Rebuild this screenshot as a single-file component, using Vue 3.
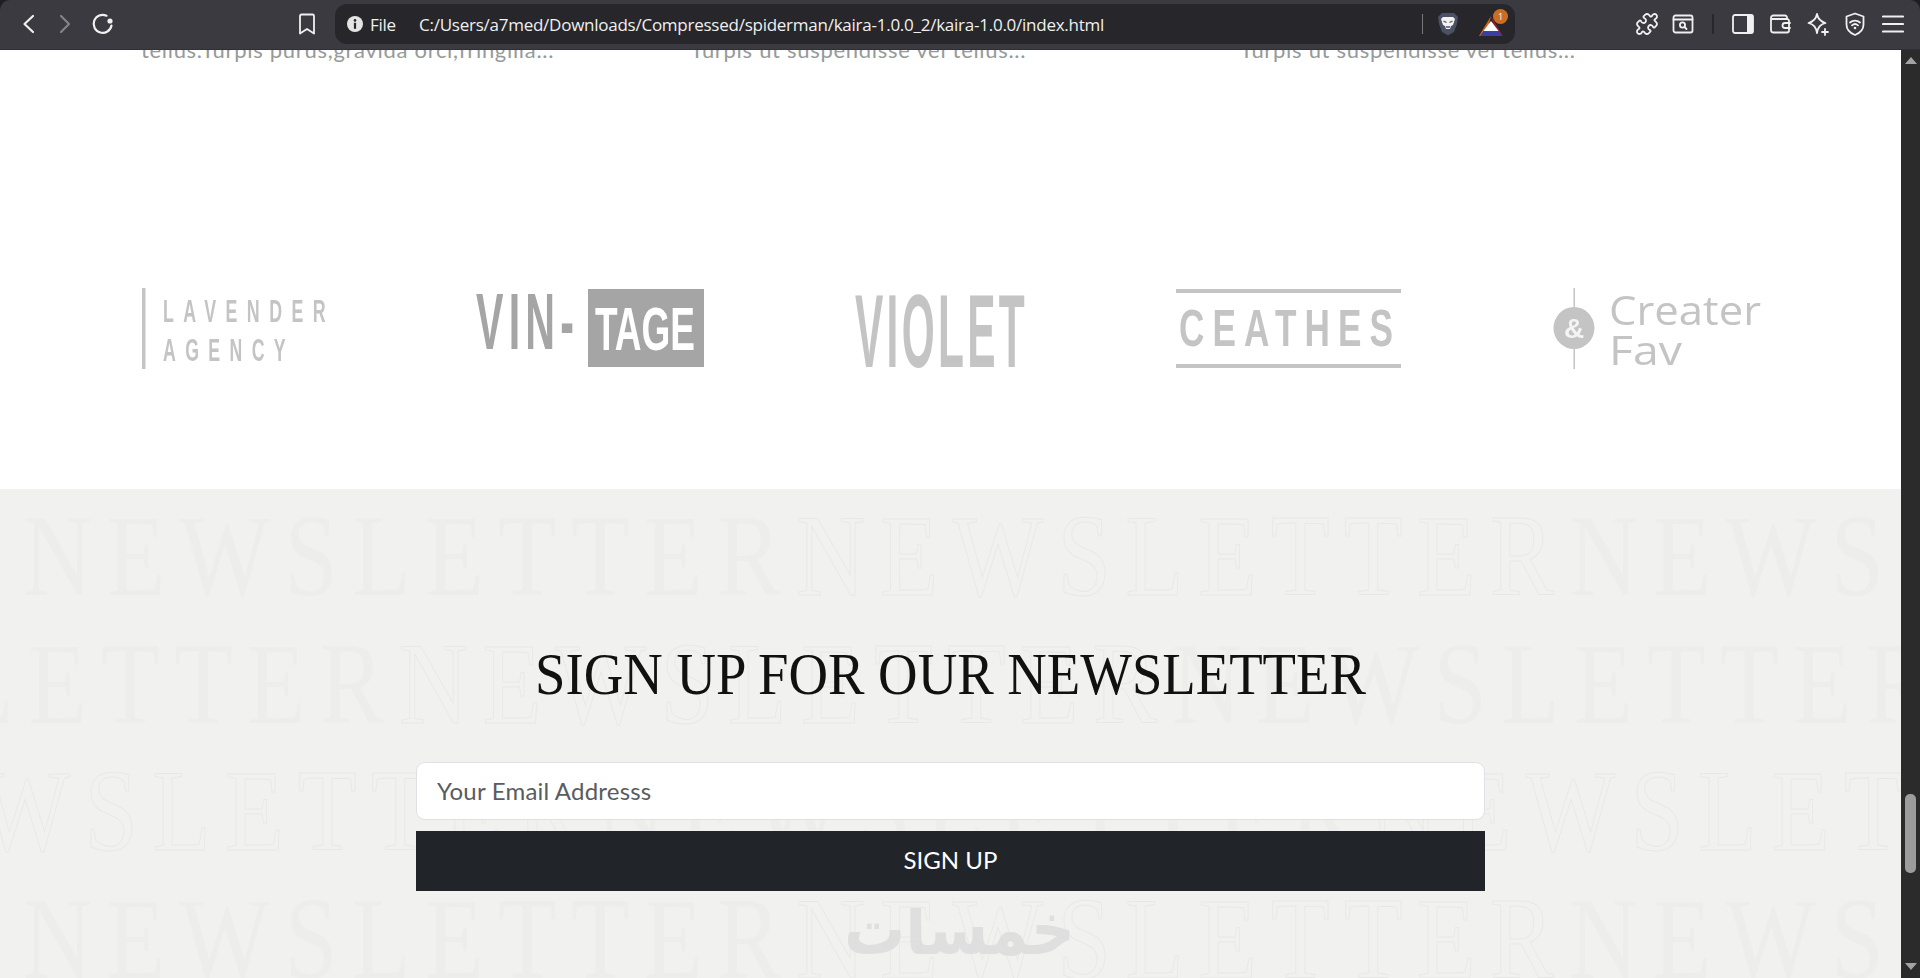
<template>
  <div class="window">
    <header class="toolbar">
      <div class="nav">
        <button class="tool">
          <svg width="24" height="24" viewBox="0 0 24 24"><path class="ln" d="M17 4l-8.5 8 8.500 8" /></svg>
        </button>
        <button class="tool dim">
          <svg width="24" height="24" viewBox="0 0 24 24"><path class="ln" d="M8 4l8 8-8 8" /></svg>
        </button>
        <button class="tool">
          <svg width="24" height="24" viewBox="0 0 24 24">
            <path class="ln" d="M20.500 13.500A9 9 0 1 1 15.500 3.700" />
            <circle cx="19" cy="9" r="2.600" fill="#f0f0f0" />
          </svg>
        </button>
      </div>
      <button class="bookmark">
        <svg width="24" height="24" viewBox="0 0 24 24"><path class="ln thin" d="M6.500 2.500h11a1.500 1.500 0 0 1 1.500 1.500v17.500l-7-4.500-7 4.500V4a1.500 1.500 0 0 1 1.500-1.500z" /></svg>
      </button>
      <div class="address">
        <svg width="16" height="16" viewBox="0 0 16 16">
          <circle cx="8" cy="8" r="8" fill="#e4e4e4" />
          <circle cx="8" cy="4.400" r="1.300" fill="#26262b" />
          <rect x="6.900" y="6.800" width="2.200" height="6" fill="#26262b" />
        </svg>
        <span class="scheme">File</span>
        <span class="url">C:/Users/a7med/Downloads/Compressed/spiderman/kaira-1.0.0_2/kaira-1.0.0/index.html</span>
        <div class="shields">
          <i class="sep"></i>
          <svg class="lion" width="22" height="24" viewBox="0 0 22 24">
            <path d="M5 1h12l4 4-1 7-3 8-6 3.500L5 20l-3-8-1-7z" fill="#4c5064" />
            <path d="M6 5h10l2 2-2 6-2 1-1 3h-4l-1-3-2-1-2-6z" fill="#f2f2f2" />
            <path d="M6.500 9l3 1.500M15.500 9l-3 1.500M9 15h4" stroke="#4c5064" stroke-width="1.300" fill="none" />
          </svg>
          <div class="rewards">
            <svg width="24" height="21" viewBox="0 0 24 21">
              <path d="M12 1L0 21h7z" fill="#d0661d" />
              <path d="M12 1l12 20h-7z" fill="#8c1f2e" />
              <path d="M12 6l7.500 10H4.500z" fill="#fff" />
              <path d="M4.500 16h15l3.500 5H1z" fill="#3b3ea3" />
            </svg>
            <b class="badge">1</b>
          </div>
        </div>
      </div>
      <div class="extensions">
        <button class="tool small">
          <svg width="24" height="24" viewBox="0 0 24 24"><path class="ln thin" d="M19.439 7.850c-.049.322.059.648.289.878l1.568 1.568c.47.47.706 1.087.706 1.704s-.235 1.233-.706 1.704l-1.611 1.611a.98.98 0 0 1-.837.276c-.47-.07-.802-.48-.968-.925a2.501 2.501 0 1 0-3.214 3.214c.446.166.855.497.925.968a.979.979 0 0 1-.276.837l-1.610 1.610a2.404 2.404 0 0 1-1.705.707 2.402 2.402 0 0 1-1.704-.706l-1.568-1.568a1.026 1.026 0 0 0-.877-.29c-.493.074-.84.504-1.020.968a2.500 2.500 0 1 1-3.237-3.237c.464-.18.894-.527.967-1.020a1.026 1.026 0 0 0-.289-.877l-1.568-1.568A2.402 2.402 0 0 1 1.998 12c0-.617.236-1.234.706-1.704L4.230 8.770c.24-.24.581-.353.917-.303.515.077.877.528 1.073 1.010a2.500 2.500 0 1 0 3.259-3.259c-.482-.196-.933-.558-1.010-1.073-.05-.336.062-.676.303-.917l1.525-1.525A2.402 2.402 0 0 1 12 1.998c.617 0 1.234.236 1.704.706l1.568 1.568c.23.23.556.338.877.29.493-.074.84-.504 1.020-.968a2.500 2.500 0 1 1 3.237 3.237c-.464.18-.894.527-.967 1.020Z" /></svg>
        </button>
        <button class="tool small">
          <svg width="22" height="22" viewBox="0 0 22 22">
            <rect class="ln thin" x="1.500" y="2.500" width="19" height="17" rx="2" />
            <path class="ln thin" d="M1.500 6.500h19" />
            <circle class="ln thin" cx="10.500" cy="12" r="2.600" />
            <path class="ln thin" d="M12.500 14l2 2" />
          </svg>
        </button>
        <i class="divider"></i>
        <button class="tool">
          <svg width="22" height="22" viewBox="0 0 22 22">
            <rect class="ln thin" x="1" y="2" width="20" height="18" rx="2" />
            <path d="M15 2h4a2 2 0 0 1 2 2v14a2 2 0 0 1-2 2h-4z" fill="#f0f0f0" />
          </svg>
        </button>
        <button class="tool">
          <svg width="22" height="22" viewBox="0 0 22 22">
            <path class="ln thin" d="M18 6V4.500A2 2 0 0 0 16 2.500H4.500A2.500 2.500 0 0 0 2 5v12a2.500 2.500 0 0 0 2.500 2.500H18a2 2 0 0 0 2-2V8a2 2 0 0 0-2-2H3" />
            <path class="ln thin" d="M21 10h-5a2.500 2.500 0 0 0 0 5h5" />
          </svg>
        </button>
        <button class="tool">
          <svg width="24" height="24" viewBox="0 0 24 24">
            <path class="ln thin" d="M11 2c1 5 3 7.500 8.500 9-5.500 1.500-7.500 4-8.500 10-1-6-3-8.500-8.500-10C8 9.500 10 7 11 2z" />
            <path class="ln thin" d="M19 17v6M16 20h6" />
          </svg>
        </button>
        <button class="tool">
          <svg width="22" height="24" viewBox="0 0 22 24">
            <path class="ln thin" d="M11 1.500l8.500 3v8c0 5-3.500 8.500-8.500 10.500-5-2-8.500-5.500-8.500-10.500v-8z" />
            <path class="ln thin" d="M6 10.500a7.500 7.500 0 0 1 10 0M8 13.300a4.500 4.500 0 0 1 6 0" />
            <circle cx="11" cy="16" r="1.300" fill="#f0f0f0" />
          </svg>
        </button>
        <button class="tool">
          <svg width="22" height="22" viewBox="0 0 22 22"><path class="ln" d="M1 3.500h20M1 11h20M1 18.500h20" /></svg>
        </button>
      </div>
    </header>

    <div class="viewport">
      <main class="page">
        <section class="cards">
          <p v-for="(line, i) in excerpts" :key="i">{{ line }}</p>
        </section>

        <section class="brands">
          <svg class="logo" width="185" height="81" viewBox="0 0 185 81">
            <rect x="0" y="0" width="3.500" height="81" fill="#c4c4c4" />
            <text class="sans bold light" x="21" y="34" font-size="32" letter-spacing="17" textLength="172" lengthAdjust="spacingAndGlyphs">LAVENDER</text>
            <text class="sans bold light" x="21" y="73" font-size="32" letter-spacing="17" textLength="132" lengthAdjust="spacingAndGlyphs">AGENCY</text>
          </svg>
          <svg class="logo" width="229" height="81" viewBox="0 0 229 81">
            <text class="sans bold dark" x="0" y="61" font-size="80" letter-spacing="10" textLength="103" lengthAdjust="spacingAndGlyphs">VIN-</text>
            <rect x="112" y="1" width="116" height="78" fill="#a5a5a5" />
            <text class="sans bold" x="119" y="62" font-size="61" fill="#fff" textLength="100" lengthAdjust="spacingAndGlyphs">TAGE</text>
          </svg>
          <svg class="logo" width="170" height="81" viewBox="0 0 170 81">
            <text class="sans bold light" x="0" y="79" font-size="103" letter-spacing="8" textLength="173" lengthAdjust="spacingAndGlyphs">VIOLET</text>
          </svg>
          <svg class="logo" width="228" height="81" viewBox="0 0 228 81">
            <rect x="2" y="1" width="225" height="4" fill="#c4c4c4" />
            <rect x="2" y="76" width="225" height="4" fill="#c4c4c4" />
            <text class="sans bold light" x="5" y="58" font-size="52" letter-spacing="12" textLength="222" lengthAdjust="spacingAndGlyphs">CEATHES</text>
          </svg>
          <svg class="logo" width="212" height="81" viewBox="0 0 212 81">
            <rect x="22.500" y="0" width="1.500" height="81" fill="#c4c4c4" />
            <ellipse cx="23" cy="40" rx="20.500" ry="21" fill="#c4c4c4" />
            <text class="sans" x="23" y="50" font-size="28" font-weight="700" text-anchor="middle" fill="#f4f4f4">&amp;</text>
            <text class="round light" x="58" y="37" font-size="41" textLength="152" lengthAdjust="spacingAndGlyphs">Creater</text>
            <text class="round light" x="58" y="77" font-size="41" textLength="73" lengthAdjust="spacingAndGlyphs">Fav</text>
          </svg>
        </section>

        <section class="newsletter">
          <div class="pattern" aria-hidden="true">
            <div v-for="row in patternRows" :key="row.id" class="pattern-row" :style="{ marginLeft: row.offset + 'px' }">
              <span
                v-for="n in 4"
                :key="n"
                class="word"
                :class="{ outlined: (n + row.first) % 2 === 1 }"
              >NEWSLETTER</span>
            </div>
          </div>
          <div class="signup">
            <h2>SIGN UP FOR OUR NEWSLETTER</h2>
            <form class="form" @submit.prevent>
              <input type="email" placeholder="Your Email Addresss" />
              <button type="submit">SIGN UP</button>
            </form>
          </div>
          <svg class="watermark" width="231" height="60" viewBox="0 0 231 60" aria-hidden="true">
            <text x="0" y="46" font-size="72" font-weight="700" textLength="231" lengthAdjust="spacingAndGlyphs">خمسات</text>
          </svg>
        </section>
      </main>

      <aside class="scrollbar">
        <i class="arrow up"></i>
        <i class="thumb"></i>
        <i class="arrow down"></i>
      </aside>
    </div>
  </div>
</template>

<script setup>
const excerpts = [
  "tellus.Turpis purus,gravida orci,fringilla...",
  "Turpis ut suspendisse vel tellus...",
  "Turpis ut suspendisse vel tellus...",
];

// first: 1 starts the row with the filled word, 0 with the outlined one
const patternRows = [
  { id: 1, offset: 23, first: 1 },
  { id: 2, offset: -374, first: 1 },
  { id: 3, offset: -177, first: 0 },
  { id: 4, offset: 23, first: 1 },
];
</script>

<style>
html,
body {
  margin: 0;
  height: 100%;
  overflow: hidden;
  background: #1f1f22;
}
</style>

<style scoped>
.window {
  height: 978px;
  display: flex;
  flex-direction: column;
  overflow: hidden;
  font-family: Lato, "Open Sans", sans-serif;
}

.toolbar {
  height: 50px;
  flex: none;
  display: flex;
  align-items: center;
  box-sizing: border-box;
  padding-bottom: 1px;
  background: #3a3a40;
  border-radius: 10px 10px 0 0;
  border-bottom: 1px solid #2f2f34;
  color: #f0f0f0;
}

.nav {
  display: flex;
  padding-left: 9px;
}

button {
  border: 0;
  padding: 0;
  background: none;
  font: inherit;
}

.tool {
  width: 37.5px;
  height: 36px;
  display: flex;
  align-items: center;
  justify-content: center;
}

.tool.small {
  width: 36px;
}

.tool.dim {
  opacity: 0.4;
}

.ln {
  fill: none;
  stroke: #f0f0f0;
  stroke-width: 2.2;
  stroke-linecap: round;
  stroke-linejoin: round;
}

.ln.thin {
  stroke-width: 1.8;
}

.bookmark {
  width: 24px;
  height: 24px;
  margin-left: 173px;
}

.address {
  width: 1180px;
  height: 40px;
  margin-left: 16.5px;
  box-sizing: border-box;
  padding: 0 12px;
  display: flex;
  align-items: center;
  background: #26262b;
  border-radius: 12px;
  font-family: "Open Sans", sans-serif;
  font-size: 17px;
}

.scheme {
  margin-left: 7px;
  width: 26px;
  letter-spacing: -0.3px;
}

.url {
  margin-left: 23px;
  white-space: nowrap;
  letter-spacing: -0.25px;
}

.shields {
  margin-left: auto;
  display: flex;
  align-items: center;
}

.sep {
  width: 1px;
  height: 20px;
  background: #77777c;
}

.lion {
  margin-left: 14px;
}

.rewards {
  position: relative;
  margin-left: 20px;
  height: 21px;
  margin-top: 2px;
}

.badge {
  position: absolute;
  top: -6px;
  right: -5px;
  width: 15px;
  height: 15px;
  border-radius: 50%;
  background: #c96f24;
  color: #fff;
  font-size: 9px;
  font-weight: 400;
  line-height: 15px;
  text-align: center;
}

.extensions {
  margin-left: 113.5px;
  display: flex;
  align-items: center;
}

.divider {
  width: 2px;
  height: 20px;
  margin: 0 10.25px 0 11px;
  background: #26262b;
}

.viewport {
  flex: 1;
  min-height: 0;
  display: flex;
}

.page {
  flex: 1;
  min-width: 0;
  overflow: hidden;
  background: #fff;
}

.cards {
  margin-top: -15px;
  padding-left: 141px;
  display: grid;
  grid-template-columns: repeat(3, 549.5px);
}

.cards p {
  margin: 0;
  height: 21px;
  font-size: 22px;
  line-height: 30px;
  letter-spacing: 0.7px;
  color: #969a9a;
  white-space: nowrap;
}

.brands {
  margin: 0 138px 0 142px;
  padding: 232px 0 120px;
  display: flex;
  justify-content: space-between;
}

.logo {
  flex: none;
  filter: blur(0.5px);
}

.sans {
  font-family: "Liberation Sans", sans-serif;
}

.round {
  font-family: "Open Sans", sans-serif;
}

.bold {
  font-weight: 700;
}

.light {
  fill: #c4c4c4;
}

.dark {
  fill: #a5a5a5;
}

.newsletter {
  position: relative;
  height: 489px;
  overflow: hidden;
  background: #f1f1f0;
}

.pattern {
  position: absolute;
  top: 0;
  left: 0;
  right: 0;
  padding-top: 3px;
  font-family: "Liberation Serif", serif;
  font-size: 117px;
  line-height: 127.5px;
  white-space: nowrap;
}

.pattern-row {
  display: flex;
  height: 127.5px;
}

.word {
  flex: none;
  width: 773px;
  letter-spacing: 17.5px;
  color: #ededeb;
  transform: scaleX(0.82);
  transform-origin: left center;
}

.word.outlined {
  color: transparent;
  -webkit-text-stroke: 1px #e8e8e6;
}

.signup {
  position: relative;
  width: 1069px;
  margin: 0 auto;
  padding-top: 149px;
}

h2 {
  margin: 0 0 52px;
  font-family: "Liberation Serif", serif;
  font-size: 60px;
  font-weight: 400;
  line-height: 72px;
  text-align: center;
  white-space: nowrap;
  color: #111;
  transform: scaleX(0.912);
}

.form {
  display: flex;
  flex-direction: column;
  gap: 11px;
}

input {
  height: 58px;
  box-sizing: border-box;
  padding: 0 20px 2px;
  border: 1px solid #dee2e6;
  border-radius: 9px;
  background: #fff;
  font-family: inherit;
  font-size: 24px;
  letter-spacing: 0.2px;
  outline: none;
}

input::placeholder {
  color: #595c5f;
  opacity: 1;
}

.form button {
  height: 60px;
  padding-bottom: 3px;
  background: #212529;
  color: #fff;
  font-size: 24px;
}

.watermark {
  position: absolute;
  left: 844px;
  top: 419px;
  font-family: "DejaVu Sans", sans-serif;
  fill: #dcdedd;
  opacity: 0.9;
}

.scrollbar {
  width: 19px;
  flex: none;
  display: flex;
  flex-direction: column;
  align-items: center;
  background: #2b2b2b;
}

.arrow {
  width: 0;
  height: 0;
  border-left: 6px solid transparent;
  border-right: 6px solid transparent;
}

.arrow.up {
  margin-top: 7px;
  border-bottom: 7px solid #a3a3a3;
}

.thumb {
  width: 11px;
  height: 79px;
  margin-top: 730px;
  border-radius: 5px;
  background: #9c9c9c;
}

.arrow.down {
  margin-top: 90px;
  border-top: 7px solid #a3a3a3;
}
</style>
